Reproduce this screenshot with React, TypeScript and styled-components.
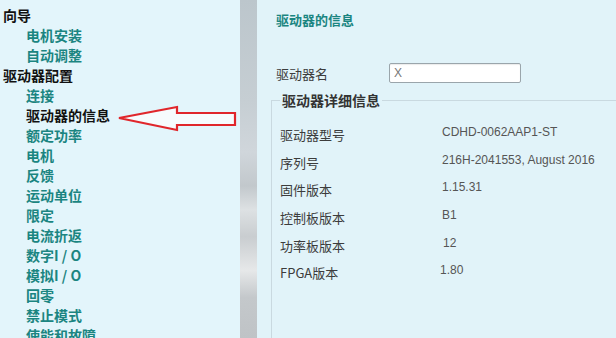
import React from "react";
import styled, { createGlobalStyle } from "styled-components";

const Global = createGlobalStyle`
  html, body { margin: 0; padding: 0; }
  body { width: 616px; height: 338px; overflow: hidden; background: #e2f4fa; }
  #root { width: 616px; height: 338px; }
`;

const CJK = `"Noto Sans CJK SC", "Liberation Sans", sans-serif`;

const Page = styled.div`
  display: flex;
  width: 616px;
  height: 338px;
  overflow: hidden;
  font-family: ${CJK};
`;

const Sidebar = styled.nav`
  position: relative;
  width: 240px;
  flex: none;
  background: #e3f5fb;
  padding: 5px 0 0 3px;
  box-sizing: border-box;
`;

const MenuItem = styled.div<{ $level: number; $active?: boolean }>`
  height: 20px;
  line-height: 20px;
  font-size: 14px;
  font-weight: 700;
  white-space: nowrap;
  padding-left: ${(p) => (p.$level === 0 ? 0 : 23)}px;
  color: ${(p) => (p.$level === 0 || p.$active ? "#111" : "#1b8581")};
`;

const ArrowBox = styled.svg`
  position: absolute;
  left: 117px;
  top: 104px;
`;

const Divider = styled.div`
  width: 17px;
  flex: none;
  background: linear-gradient(
    to bottom,
    #bcc6cc 0%,
    #c6ced3 30%,
    #d0d6db 45%,
    #c2c8cc 55%,
    #dde1e3 62%,
    #c9cdd0 70%,
    #e6e8e9 80%,
    #c4c8cb 88%,
    #bfc3c6 100%
  );
`;

const Main = styled.main`
  flex: 1;
  background: #e1f3f9;
  padding: 10px 0 0 19px;
  box-sizing: border-box;
  display: flex;
  flex-direction: column;
`;

const Title = styled.h1`
  margin: 0;
  height: 20px;
  line-height: 20px;
  font-size: 13px;
  font-weight: 700;
  color: #1b8581;
`;

const NameRow = styled.div`
  display: flex;
  align-items: center;
  margin-top: 33px;
  height: 20px;
`;

const Label = styled.span`
  font-size: 13px;
  color: #3c3c3c;
  white-space: nowrap;
`;

const NameLabel = styled(Label)`
  width: 113px;
`;

const TextInput = styled.input`
  width: 132px;
  height: 20px;
  box-sizing: border-box;
  border: 1px solid #9aa5ab;
  border-radius: 2px;
  background: #fff;
  font-family: "Liberation Sans", Arial, sans-serif;
  font-size: 12px;
  color: #777;
  padding: 0 4px;
  box-shadow: inset 0 1px 1px rgba(0,0,0,0.08);
  outline: none;
`;

const Fieldset = styled.fieldset`
  margin: 8px 0 0 -5px;
  padding: 0 0 0 8px;
  border: none;
  border-top: 1px solid #c9d9e0;
  border-left: 1px solid #c9d9e0;
  flex: 1;
  min-width: 0;
`;

const Legend = styled.legend`
  padding: 0 2px;
  font-size: 14px;
  font-weight: 700;
  color: #333;
  line-height: 18px;
`;

const Grid = styled.div`
  display: grid;
  grid-template-columns: 162px 1fr;
  grid-auto-rows: 27.6px;
  align-items: center;
  margin-top: 12px;
`;

const Value = styled.span<{ $dx?: number }>`
  font-family: "Liberation Sans", Arial, sans-serif;
  font-size: 12px;
  color: #555;
  margin-top: -5px;
  margin-left: ${(p) => p.$dx ?? 0}px;
  white-space: nowrap;
`;

const menu: { text: string; level: number; active?: boolean }[] = [
  { text: "向导", level: 0 },
  { text: "电机安装", level: 1 },
  { text: "自动调整", level: 1 },
  { text: "驱动器配置", level: 0 },
  { text: "连接", level: 1 },
  { text: "驱动器的信息", level: 1, active: true },
  { text: "额定功率", level: 1 },
  { text: "电机", level: 1 },
  { text: "反馈", level: 1 },
  { text: "运动单位", level: 1 },
  { text: "限定", level: 1 },
  { text: "电流折返", level: 1 },
  { text: "数字I / O", level: 1 },
  { text: "模拟I / O", level: 1 },
  { text: "回零", level: 1 },
  { text: "禁止模式", level: 1 },
  { text: "使能和故障", level: 1 },
];

const details: { label: string; value: string; dx?: number }[] = [
  { label: "驱动器型号", value: "CDHD-0062AAP1-ST" },
  { label: "序列号", value: "216H-2041553, August 2016" },
  { label: "固件版本", value: "1.15.31" },
  { label: "控制板版本", value: "B1" },
  { label: "功率板版本", value: "12", dx: 1 },
  { label: "FPGA版本", value: "1.80", dx: -2 },
];

export default function App() {
  return (
    <>
      <Global />
      <Page>
        <Sidebar>
          {menu.map((m) => (
            <MenuItem key={m.text} $level={m.level} $active={m.active}>
              {m.text}
            </MenuItem>
          ))}
          <ArrowBox width="122" height="30" viewBox="0 0 122 30">
            <path
              d="M2 14 L60 3 L60 9 L118 9 L118 21 L60 21 L60 26 Z"
              fill="#f6fbfd"
              stroke="#e0262b"
              strokeWidth="2.2"
              strokeLinejoin="miter"
            />
          </ArrowBox>
        </Sidebar>
        <Divider />
        <Main>
          <Title>驱动器的信息</Title>
          <NameRow>
            <NameLabel>驱动器名</NameLabel>
            <TextInput defaultValue="X" />
          </NameRow>
          <Fieldset>
            <Legend>驱动器详细信息</Legend>
            <Grid>
              {details.map((d) => (
                <React.Fragment key={d.label}>
                  <Label>{d.label}</Label>
                  <Value $dx={d.dx}>{d.value}</Value>
                </React.Fragment>
              ))}
            </Grid>
          </Fieldset>
        </Main>
      </Page>
    </>
  );
}
